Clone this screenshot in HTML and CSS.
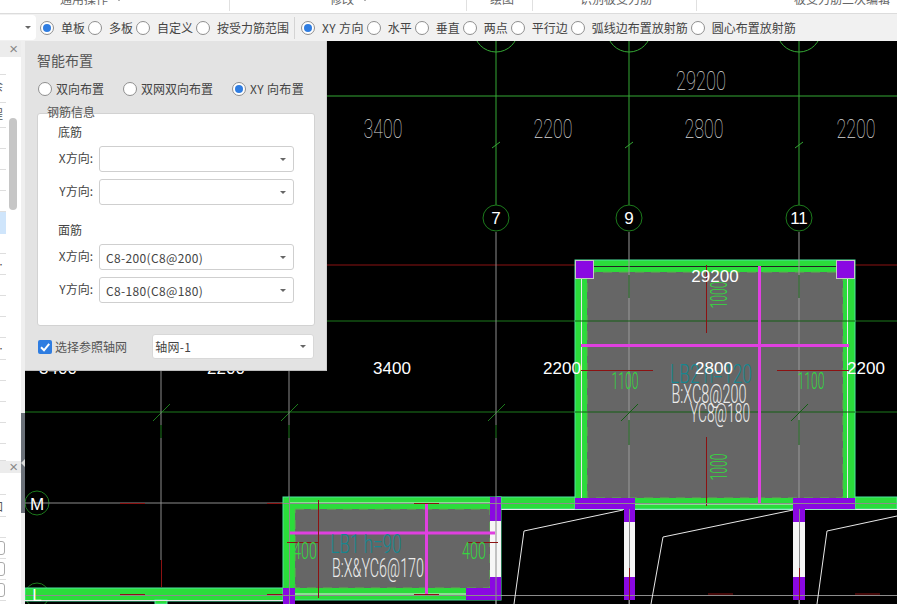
FILE: index.html
```html
<!DOCTYPE html>
<html lang="zh">
<head>
<meta charset="utf-8">
<title>智能布置</title>
<link rel="stylesheet" href="styles.css">
</head>
<body>
<div class="app">
  <div class="ribbon">
    <div class="rgroup rg1"><span>通用操作</span><i class="caret"></i></div>
    <div class="rgroup rg2"><span>修改</span><i class="caret"></i></div>
    <div class="rgroup rg3"><span>绘图</span></div>
    <div class="rgroup rg4"><span>识别板受力筋</span></div>
    <div class="rgroup rg5"><span>板受力筋二次编辑</span></div>
  </div>
  <div class="toolbar">
    <div class="tcombo"><i class="caret"></i></div>
    <label class="opt"><i class="radio on"></i><span>单板</span></label>
    <label class="opt"><i class="radio"></i><span>多板</span></label>
    <label class="opt"><i class="radio"></i><span>自定义</span></label>
    <label class="opt"><i class="radio"></i><span>按受力筋范围</span></label>
    <i class="tsep"></i>
    <label class="opt"><i class="radio on"></i><span class="latin">XY 方向</span></label>
    <label class="opt"><i class="radio"></i><span>水平</span></label>
    <label class="opt"><i class="radio"></i><span>垂直</span></label>
    <label class="opt"><i class="radio"></i><span>两点</span></label>
    <label class="opt"><i class="radio"></i><span>平行边</span></label>
    <label class="opt"><i class="radio"></i><span>弧线边布置放射筋</span></label>
    <label class="opt"><i class="radio"></i><span>圆心布置放射筋</span></label>
  </div>
  <div class="main">
    <aside class="side">
      <div class="sidecol">
        <div class="shead"><span class="close">×</span></div>
        <div class="srow h18"></div>
        <div class="srow h28"><span class="stext">余</span></div>
        <div class="srow h25"><span class="stext">程</span></div>
        <div class="srow"></div>
        <div class="srow"></div>
        <div class="srow"></div>
        <div class="srow"></div>
        <div class="srow sel"></div>
        <div class="srow h20"></div>
        <div class="srow"><span class="stext">…</span></div>
        <div class="srow"></div>
        <div class="srow"></div>
        <div class="srow"></div>
        <div class="srow h22"><span class="stext">…</span></div>
        <div class="srow"></div>
        <div class="srow"></div>
        <div class="srow"></div>
        <div class="srow"></div>
        <div class="srow h17"></div>
        <div class="sgap"></div>
        <div class="shead low"><span class="close">×</span></div>
        <div class="srow h22"></div>
        <div class="srow h22"><span class="stext">加</span></div>
        <div class="srow"></div>
        <div class="srow"><i class="scheck"></i></div>
        <div class="srow"><i class="scheck"></i></div>
        <div class="srow"><i class="scheck"></i></div>
        <div class="scrollthumb"></div>
      </div>
      <div class="gutter"><div class="handle"><i class="harrow"></i></div></div>
    </aside>
    <section class="canvas">
      <svg class="cad" viewBox="25 41 872 563" width="872" height="563" xmlns="http://www.w3.org/2000/svg">
        <rect class="bg" x="25" y="41" width="872" height="563"/>

        <!-- axis grid -->
        <g class="axis-bright">
          <line x1="25" y1="96" x2="897" y2="96"/>
          <line x1="496" y1="41" x2="496" y2="205"/>
          <line x1="629" y1="41" x2="629" y2="205"/>
          <line x1="799" y1="41" x2="799" y2="205"/>
          <circle cx="496" cy="30" r="22"/>
          <circle cx="629" cy="30" r="22"/>
          <circle cx="799" cy="30" r="22"/>
          <path d="M492 148 500 142M625 148 633 142M795 148 803 142"/>
        </g>
        <g class="axis-dim">
          <line x1="25" y1="321" x2="897" y2="321"/>
          <line x1="25" y1="412" x2="897" y2="412"/>
          <path d="M153 421 170 404M281 421 298 404M488 421 505 404M621 421 638 404M791 421 808 404"/>
          <circle cx="496" cy="218" r="13"/>
          <circle cx="629" cy="218" r="13"/>
          <circle cx="799" cy="218" r="13"/>
          <circle cx="37" cy="503" r="12"/>
          <circle cx="37" cy="595" r="12"/>
        </g>
        <g class="red-line">
          <line x1="25" y1="265" x2="897" y2="265"/>
        </g>
        <g class="axis-gray">
          <line x1="25" y1="503" x2="897" y2="503"/>
          <line x1="161" y1="41" x2="161" y2="425"/>
          <line x1="289" y1="41" x2="289" y2="425"/>
          <line x1="161" y1="438" x2="161" y2="560"/>
          <line x1="289" y1="438" x2="289" y2="604"/>
          <line x1="496" y1="232" x2="496" y2="425"/>
          <line x1="496" y1="438" x2="496" y2="604"/>
        </g>
        <g class="axis-dim">
          <path d="M161 425V438M289 425V438M496 425V438"/>
        </g>

        <!-- long bottom strip -->
        <rect class="beam" x="25" y="588" width="262" height="13"/>
        <rect class="beam" x="155" y="600" width="12" height="4"/>
        <line class="white-thin" x1="25" y1="600.500" x2="283" y2="600.500"/>

        <!-- horizontal strip -->
        <rect class="beam" x="497" y="497" width="400" height="12"/>
        <line class="white-thin" x1="501" y1="509.500" x2="897" y2="509.500"/>

        <!-- large room -->
        <rect class="beam" x="575" y="260" width="280" height="249"/>
        <rect class="slab" x="587" y="272" width="256" height="226"/>
        <path class="white-thin" d="M581.500 267V504H847.500V267"/>
        <line class="dark-thin" x1="581" y1="266.500" x2="848" y2="266.500"/>
        <g class="room-axis">
          <line x1="629" y1="232" x2="629" y2="604"/>
          <line x1="799" y1="232" x2="799" y2="604"/>
          <line x1="575" y1="321" x2="855" y2="321"/>
          <line x1="575" y1="412" x2="855" y2="412"/>
          <path d="M621 421 638 404M791 421 808 404M629 275V298M799 275V298M629 420V445M799 420V445"/>
        </g>
        <g class="column">
          <rect x="575" y="260" width="18" height="18"/>
          <rect x="836" y="260" width="19" height="18"/>
          <path d="M575 498H635V522H624V509H575Z"/>
          <path d="M793 498H855V509H805V522H793Z"/>
          <rect x="624" y="577" width="11" height="23"/>
          <rect x="793" y="577" width="12" height="23"/>
        </g>
        <rect class="wall" x="624" y="522" width="11" height="55"/>
        <rect class="wall" x="793" y="522" width="12" height="55"/>
        <g class="axis-gray">
          <line x1="629.500" y1="509" x2="629.500" y2="604"/>
          <line x1="799.500" y1="509" x2="799.500" y2="604"/>
          <line x1="25" y1="595.500" x2="897" y2="595.500"/>
        </g>
        <rect class="col-edge" x="575.500" y="260.500" width="18" height="18"/>
        <rect class="col-edge" x="836.500" y="260.500" width="18" height="18"/>
        <g class="rebar">
          <line x1="581" y1="345.500" x2="849" y2="345.500"/>
          <line x1="759.500" y1="266" x2="759.500" y2="504"/>
        </g>
        <g class="red-line">
          <line x1="706.500" y1="265" x2="706.500" y2="333"/>
          <line x1="706.500" y1="437" x2="706.500" y2="506"/>
          <line x1="581" y1="370.500" x2="653" y2="370.500"/>
          <line x1="777" y1="370.500" x2="849" y2="370.500"/>
          <line x1="707" y1="503.500" x2="733" y2="503.500"/>
          <line x1="855" y1="503.500" x2="880" y2="503.500"/>
          <line x1="120" y1="503.500" x2="145" y2="503.500"/>
          <line x1="267" y1="503.500" x2="292" y2="503.500"/>
          <line x1="161.500" y1="560" x2="161.500" y2="587"/>
          <line x1="120" y1="594.500" x2="145" y2="594.500"/>
          <line x1="267" y1="594.500" x2="292" y2="594.500"/>
          <line x1="708" y1="594" x2="733" y2="594"/>
          <line x1="855" y1="594" x2="880" y2="594"/>
          <line x1="629.500" y1="568" x2="629.500" y2="600"/>
          <line x1="799.500" y1="568" x2="799.500" y2="600"/>
        </g>

        <!-- small room -->
        <rect class="beam" x="283" y="497" width="218" height="103"/>
        <rect class="slab" x="295" y="509" width="195" height="79"/>
        <path class="white-thin" d="M289.500 503H490M289.500 503V594H490"/>
        <g class="column">
          <path d="M490 497H501V521H490Z"/>
          <path d="M490 577H501V600H466V588H490Z"/>
          <rect x="283" y="588" width="12" height="16"/>
        </g>
        <rect class="wall" x="490" y="521" width="11" height="56"/>
        <line class="axis-gray-line" x1="496" y1="497" x2="496" y2="604"/>
        <line class="axis-gray-line" x1="283" y1="503.500" x2="897" y2="503.500"/>
        <line class="axis-gray-line" x1="25" y1="595.500" x2="501" y2="595.500"/>
        <line class="axis-gray-line" x1="289.500" y1="497" x2="289.500" y2="604"/>
        <g class="rebar">
          <line x1="290" y1="533" x2="495" y2="533"/>
          <line x1="426.500" y1="503" x2="426.500" y2="594"/>
        </g>
        <g class="red-line">
          <line x1="318.500" y1="500" x2="318.500" y2="598"/>
          <line x1="287" y1="542.500" x2="318" y2="542.500"/>
          <line x1="467" y1="542.500" x2="498" y2="542.500"/>
          <line x1="414" y1="503.500" x2="439" y2="503.500"/>
          <line x1="414" y1="594.500" x2="439" y2="594.500"/>
        </g>

        <!-- rooms outline -->
        <path class="white-thin" d="M623 510 524 531 514 604M793 510 663 537 651 604M897 516 827 531 817 604"/>

        <!-- dimension text -->
        <g class="dim-cad">
          <text x="701" y="90" textLength="50" lengthAdjust="spacingAndGlyphs">29200</text>
          <text x="383" y="138" textLength="39" lengthAdjust="spacingAndGlyphs">3400</text>
          <text x="553" y="138" textLength="39" lengthAdjust="spacingAndGlyphs">2200</text>
          <text x="704" y="138" textLength="39" lengthAdjust="spacingAndGlyphs">2800</text>
          <text x="856" y="138" textLength="39" lengthAdjust="spacingAndGlyphs">2200</text>
        </g>
        <g class="rebar-num">
          <text x="625" y="389" textLength="27" lengthAdjust="spacingAndGlyphs">1100</text>
          <text x="811" y="389" textLength="27" lengthAdjust="spacingAndGlyphs">1100</text>
          <text transform="translate(727 295) rotate(-90)" textLength="27" lengthAdjust="spacingAndGlyphs">1000</text>
          <text transform="translate(727 467) rotate(-90)" textLength="27" lengthAdjust="spacingAndGlyphs">1000</text>
          <text x="305" y="559" textLength="24" lengthAdjust="spacingAndGlyphs">400</text>
          <text x="474" y="559" textLength="24" lengthAdjust="spacingAndGlyphs">400</text>
        </g>
        <g class="slab-name">
          <text x="711" y="383" textLength="82" lengthAdjust="spacingAndGlyphs">LB2 h=120</text>
          <text x="366" y="553" textLength="71" lengthAdjust="spacingAndGlyphs">LB1 h=90</text>
        </g>
        <g class="slab-rebar">
          <text x="709" y="403" textLength="75" lengthAdjust="spacingAndGlyphs">B:XC8@200</text>
          <text x="720" y="422" textLength="60" lengthAdjust="spacingAndGlyphs">YC8@180</text>
          <text x="378" y="577" textLength="92" lengthAdjust="spacingAndGlyphs">B:X&amp;YC6@170</text>
        </g>
        <g class="dim-plain">
          <text x="58" y="374">3400</text>
          <text x="226" y="374">2200</text>
          <text x="392" y="374">3400</text>
          <text x="562" y="374">2200</text>
          <text x="714" y="374">2800</text>
          <text x="866" y="374">2200</text>
          <text x="715" y="282">29200</text>
        </g>
        <g class="axis-label">
          <text x="496" y="224">7</text>
          <text x="629" y="224">9</text>
          <text x="799" y="224">11</text>
          <text x="37" y="510">M</text>
          <text x="37" y="601">L</text>
        </g>
      </svg>

      <div class="dialog">
        <h2 class="dtitle">智能布置</h2>
        <div class="dmodes">
          <label class="opt m1"><i class="radio"></i><span>双向布置</span></label>
          <label class="opt m2"><i class="radio"></i><span>双网双向布置</span></label>
          <label class="opt m3"><i class="radio on"></i><span class="latin">XY 向布置</span></label>
        </div>
        <div class="group">
          <span class="legend">钢筋信息</span>
          <div class="ghead">底筋</div>
          <div class="frow"><span class="flabel">X方向:</span><div class="select"><i class="caret"></i></div></div>
          <div class="frow"><span class="flabel">Y方向:</span><div class="select"><i class="caret"></i></div></div>
          <div class="ghead second">面筋</div>
          <div class="frow"><span class="flabel">X方向:</span><div class="select"><span class="latin">C8-200(C8@200)</span><i class="caret"></i></div></div>
          <div class="frow"><span class="flabel">Y方向:</span><div class="select"><span class="latin">C8-180(C8@180)</span><i class="caret"></i></div></div>
        </div>
        <div class="dfoot">
          <label class="chk">
            <svg class="chkbox" viewBox="0 0 14 14" width="14" height="14" xmlns="http://www.w3.org/2000/svg"><rect class="chkbg" width="14" height="14" rx="2"/><path class="chkmark" d="M3 7.300 6 10.300 11.200 3.800"/></svg>
            <span>选择参照轴网</span>
          </label>
          <div class="select grid"><span class="latin">轴网-1</span><i class="caret"></i></div>
        </div>
      </div>
    </section>
  </div>
</div>
</body>
</html>
```

FILE: styles.css
```css
* { box-sizing: border-box; }
html, body { margin: 0; padding: 0; }
body {
  width: 897px;
  height: 604px;
  overflow: hidden;
  background: #fff;
  font-family: "Noto Sans CJK SC", "Liberation Sans", sans-serif;
  font-size: 12px;
  color: #444;
}
i { display: block; font-style: normal; }
.app { display: flex; flex-direction: column; width: 897px; height: 604px; }
.latin { letter-spacing: 0.35px; }

.caret {
  width: 0; height: 0;
  border-left: 3px solid transparent;
  border-right: 3px solid transparent;
  border-top: 3px solid #666;
}

/* ribbon */
.ribbon {
  display: flex;
  height: 14px;
  flex: none;
  background: #fff;
  border-bottom: 1px solid #dcdcdc;
  overflow: hidden;
}
.rgroup {
  display: flex;
  align-items: flex-end;
  gap: 8px;
  height: 11px;
  padding-bottom: 5px;
  color: #666;
  line-height: 14px;
  border-right: 1px solid #e0e0e0;
}
.rgroup .caret { margin-bottom: 5px; }
.rg1 { width: 230px; padding-left: 60px; }
.rg2 { width: 237px; padding-left: 100px; }
.rg3 { width: 66px; padding-left: 23px; }
.rg4 { width: 164px; padding-left: 47px; }
.rg5 { flex: 1; padding-left: 97px; border-right: 0; }

/* toolbar */
.toolbar {
  display: flex;
  align-items: center;
  height: 27px;
  flex: none;
  background: #f1f1f1;
  color: #444;
}
.tcombo {
  display: flex;
  align-items: center;
  justify-content: flex-end;
  width: 36px;
  height: 25px;
  margin-right: 4px;
  padding-right: 5px;
  background: #fff;
  border-radius: 0 4px 4px 0;
}
.opt { display: flex; align-items: center; gap: 7px; margin-right: 3px; white-space: nowrap; line-height: 16px; }
.radio {
  position: relative;
  flex: none;
  width: 14px;
  height: 14px;
  border: 1px solid #8f8f8f;
  border-radius: 50%;
  background: #fff;
}
.radio.on::after {
  content: "";
  position: absolute;
  left: 2px; top: 2px;
  width: 8px; height: 8px;
  border-radius: 50%;
  background: #2f7de1;
}
.tsep { width: 1px; height: 22px; background: #d4d4d4; margin: 0 6px 0 2px; }

/* main */
.main { display: flex; flex: 1; min-height: 0; }

/* side panels */
.side { display: flex; flex: none; width: 25px; background: #fff; }
.sidecol { position: relative; width: 21px; height: 563px; overflow: hidden; background: #fff; }
.shead {
  display: flex;
  align-items: center;
  justify-content: flex-end;
  height: 16px;
  padding-right: 3px;
  background: #ececec;
}
.shead.low { height: 12px; }
.close { color: #888; font: 15px/14px "Liberation Sans", sans-serif; }
.srow {
  position: relative;
  width: 6px;
  height: 21px;
  border-bottom: 1px solid #dedede;
}
.h17 { height: 17px; }
.h18 { height: 18px; }
.h20 { height: 20px; }
.h22 { height: 22px; }
.h25 { height: 25px; }
.h28 { height: 28px; }
.srow.sel { height: 22px; background: #cfe5fb; border-bottom: 0; }
.stext { position: absolute; left: -9px; top: 3px; color: #555; line-height: 16px; white-space: nowrap; }
.scheck {
  position: absolute;
  left: -8px; top: 3px;
  width: 13px; height: 14px;
  border: 1px solid #aaa;
  border-radius: 3px;
  background: #fff;
}
.scrollthumb {
  position: absolute;
  left: 9px; top: 77px;
  width: 8px; height: 92px;
  border-radius: 4px;
  background: #c6c6c6;
}
.gutter { position: relative; width: 4px; background: #efefef; }
.handle {
  position: absolute;
  left: 0; top: 372px;
  width: 4px; height: 100px;
  background: #6b7179;
}
.harrow {
  position: absolute;
  left: 0; top: 46px;
  width: 0; height: 0;
  border-top: 4px solid transparent;
  border-bottom: 4px solid transparent;
  border-right: 4px solid #d8d8d8;
}

/* canvas */
.canvas { position: relative; flex: 1; min-width: 0; overflow: hidden; background: #000; }
.cad { display: block; }
.cad line, .cad path, .cad circle { fill: none; }
.bg { fill: #000; }
.axis-bright line, .axis-bright circle, .axis-bright path { stroke: #35a835; stroke-width: 1; }
.axis-dim line, .axis-dim circle, .axis-dim path { stroke: #1c7a1c; stroke-width: 1; }
.axis-gray line, .axis-gray-line { stroke: #8c8c8c; stroke-width: 1; }
.red-line line { stroke: #8c1212; stroke-width: 1; }
.white-thin { stroke: #e8e8e8; stroke-width: 1; fill: none !important; }
.dark-thin { stroke: #222; stroke-width: 1; }
.beam { fill: #2bdc3b; stroke: #4fe6a0; stroke-width: 1; }
.slab { fill: #666; stroke: #55b84a; stroke-width: 1; stroke-dasharray: 9 7; }
.room-axis line { stroke: #9a9a9a; stroke-width: 1; }
.room-axis line:nth-child(3), .room-axis line:nth-child(4), .room-axis path { stroke: #135f13; }
.column rect, .column path { fill: #8a08e2 !important; }
.col-edge { fill: none; stroke: #c6c6c6; stroke-width: 1; }
.wall { fill: #f6f6f6; }
.rebar line { stroke: #e040e0; stroke-width: 3; }

.dim-cad text, .rebar-num text, .slab-name text, .slab-rebar text {
  font-family: Roboto, "Liberation Sans", sans-serif;
  font-weight: 300;
  font-size: 25px;
  text-anchor: middle;
}
.dim-cad text { fill: #d6d6d6; font-weight: 100; }
.rebar-num text { fill: #35d83f; font-size: 24px; }
.slab-name text { fill: #178690; }
.slab-rebar text { fill: #ececec; }
.dim-plain text, .axis-label text {
  fill: #fff;
  font: 17px "Liberation Sans", sans-serif;
  text-anchor: middle;
}

/* dialog */
.dialog {
  position: absolute;
  left: 0; top: 0;
  width: 302px;
  height: 330px;
  padding: 11px 12px 0;
  background: #e3e3e3;
  border-right: 1px solid #cfcfcf;
  border-bottom: 1px solid #bdbdbd;
}
.dtitle { margin: 0; font-size: 14px; font-weight: 400; line-height: 16px; color: #555; }
.dmodes { display: flex; align-items: center; height: 16px; margin-top: 13px; }
.dmodes .opt { gap: 4px; margin: 0; }
.dmodes .radio { margin-left: 1px; }
.m1 { width: 85px; }
.m2 { width: 109px; }
.group {
  position: relative;
  width: 278px;
  height: 213px;
  margin-top: 16px;
  padding: 8px 0 0 20px;
  background: #fff;
  border: 1px solid #d2d2d2;
  border-radius: 3px;
}
.legend {
  position: absolute;
  left: 9px; top: -10px;
  line-height: 16px;
  color: #555;
}
.ghead { height: 20px; line-height: 20px; margin-bottom: 4px; color: #444; }
.ghead.second { margin-top: 15px; }
.frow { display: flex; align-items: center; height: 26px; margin-bottom: 7px; }
.flabel { width: 36px; margin: 0 5px 3px -1px; text-align: right; white-space: nowrap; color: #444; flex: none; }
.frow .select { margin-left: 1px; }
.select {
  display: flex;
  align-items: center;
  justify-content: space-between;
  width: 195px;
  height: 26px;
  padding: 0 7px 0 6px;
  background: #fff;
  border: 1px solid #cfcfcf;
  border-radius: 3px;
  font-size: 12px;
  color: #444;
}
.select .caret { margin-left: auto; }
.dfoot { display: flex; align-items: center; height: 25px; margin-top: 8px; }
.chk { display: flex; align-items: center; gap: 3px; width: 115px; margin-left: 1px; color: #555; }
.chkbox { flex: none; }
.chkbg { fill: #2f7de1; }
.chkmark { fill: none; stroke: #fff; stroke-width: 2; }
.select.grid { width: 163px; height: 25px; padding-left: 2px; border-color: #d8d8d8; }
```
